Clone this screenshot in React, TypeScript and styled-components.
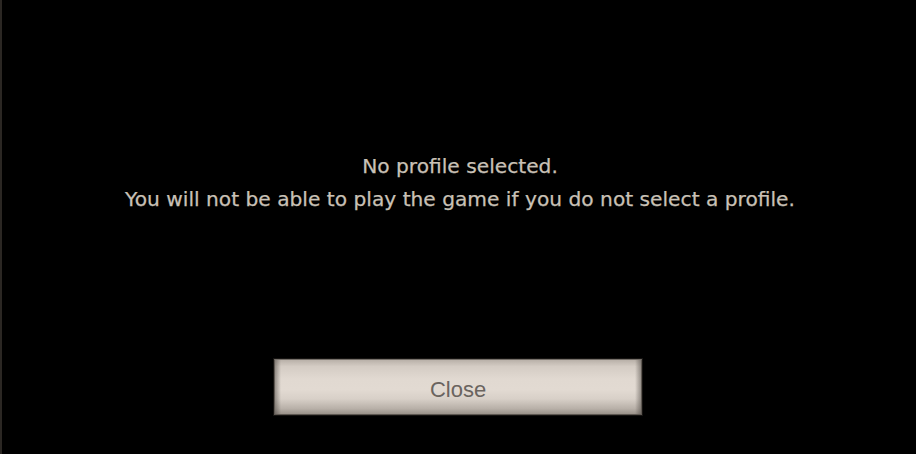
import React from "react";
import styled, { createGlobalStyle } from "styled-components";

const Global = createGlobalStyle`
  html, body { margin: 0; padding: 0; background: #000; }
  body { width: 916px; height: 454px; overflow: hidden; }
`;

const Screen = styled.div`
  box-sizing: border-box;
  width: 916px;
  height: 454px;
  background: #000;
  border-left: 2px solid #2b2723;
  display: flex;
  flex-direction: column;
  align-items: center;
  font-family: "DejaVu Sans", "Liberation Sans", sans-serif;
`;

const Message = styled.div`
  margin-top: 150px;
  margin-left: 2px;
  color: #c9c1b6;
  font-size: 20.2px;
  line-height: 33px;
  text-align: center;
  -webkit-text-stroke: 0.25px #c9c1b6;
`;

const Line = styled.div``;

const CloseButton = styled.button`
  box-sizing: border-box;
  margin-top: 143px;
  margin-left: -2px;
  width: 368px;
  height: 56px;
  border: 1px solid #5e5852;
  border-top-color: #77716b;
  background:
    linear-gradient(90deg, rgba(60,55,50,0.45) 0px, rgba(60,55,50,0) 6px, rgba(60,55,50,0) calc(100% - 6px), rgba(60,55,50,0.45) 100%),
    linear-gradient(180deg, #b9b1a9 0%, #d4ccc4 12%, #e1d9d1 35%, #e2dad2 55%, #d8d0c8 72%, #b8b0a8 90%, #9a928a 100%);
  color: #6a645f;
  font-family: "Liberation Sans", Arial, sans-serif;
  font-size: 22px;
  padding: 0;
  padding-top: 5px;
  cursor: pointer;
  box-shadow: 0 0 0 1px #151311;
`;

export default function App() {
  return (
    <>
      <Global />
      <Screen>
        <Message>
          <Line>No profile selected.</Line>
          <Line>You will not be able to play the game if you do not select a profile.</Line>
        </Message>
        <CloseButton>Close</CloseButton>
      </Screen>
    </>
  );
}
